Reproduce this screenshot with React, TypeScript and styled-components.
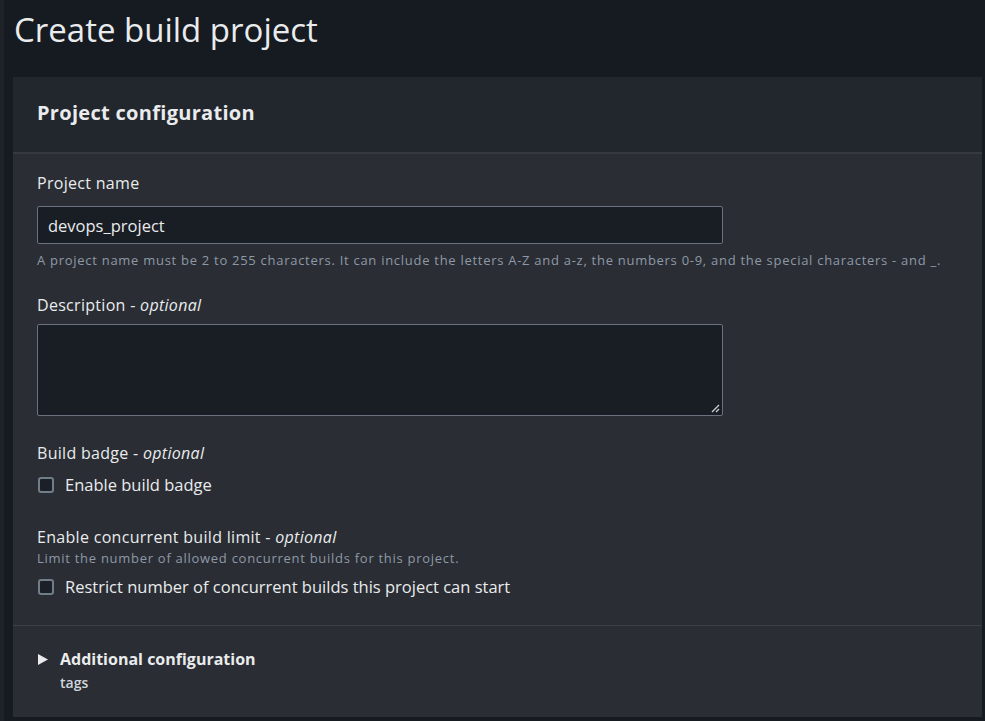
import React from "react";
import styled, { createGlobalStyle } from "styled-components";

const Global = createGlobalStyle`
  html, body { margin: 0; padding: 0; background: #161a21; }
  body { font-family: "Open Sans", "Noto Sans", sans-serif; color: #e9ebed; }
  * { box-sizing: border-box; }
`;

const Page = styled.div`
  width: 985px;
  height: 721px;
  background: #161a21;
  border-left: 4px solid #1f2329;
  padding: 0 3px 0 9px;
  display: flex;
  flex-direction: column;
  overflow: hidden;
`;

const Title = styled.h1`
  margin: 0;
  height: 77px;
  padding-top: 8px;
  padding-left: 1px;
  font-size: 33px;
  font-weight: 400;
  color: #e9ebed;
  line-height: 44px;
`;

const Card = styled.section`
  background: #2a2d33;
  height: 640px;
  display: flex;
  flex-direction: column;
  box-shadow: inset 0 1px 0 #30343b;
`;

const CardHeader = styled.header`
  background: #22262d;
  height: 77px;
  border-bottom: 2px solid #353a41;
  padding: 22px 24px 0;
`;

const CardTitle = styled.h2`
  margin: 0;
  font-size: 20px;
  font-weight: 700;
  letter-spacing: 0.3px;
  line-height: 28px;
  color: #e9ebed;
`;

const Body = styled.div`
  padding: 17px 24px 0;
  display: flex;
  flex-direction: column;
`;

const Field = styled.div<{ $gap?: number }>`
  display: flex;
  flex-direction: column;
  margin-bottom: ${(p) => p.$gap ?? 0}px;
`;

const Label = styled.div<{ $mb: number }>`
  font-size: 16px;
  letter-spacing: 0.3px;
  line-height: 24px;
  color: #e9ebed;
  margin-bottom: ${(p) => p.$mb}px;
  em { font-style: italic; }
`;

const Hint = styled.div<{ $mt: number; $mb: number }>`
  font-size: 13px;
  letter-spacing: 0.72px;
  line-height: ${(p) => (p.$mt ? 20 : 18)}px;
  color: #8d99a8;
  margin-top: ${(p) => p.$mt}px;
  margin-bottom: ${(p) => p.$mb}px;
  white-space: nowrap;
`;

const Input = styled.div`
  width: 686px;
  height: 38px;
  background: #191d24;
  border: 1px solid #6a737d;
  border-radius: 2px;
  padding: 0 10px;
  display: flex;
  align-items: center;
  font-size: 16.5px;
  color: #e9ebed;
`;

const TextArea = styled.div`
  width: 686px;
  height: 92px;
  background: #191d24;
  border: 1px solid #6a737d;
  border-radius: 2px;
  position: relative;
`;

const Grip = styled.svg`
  position: absolute;
  right: 2px;
  bottom: 2px;
`;

const CheckRow = styled.label`
  display: flex;
  align-items: center;
  gap: 11px;
  font-size: 16.5px;
  line-height: 24px;
  color: #e9ebed;
`;

const Box = styled.span`
  width: 16px;
  height: 16px;
  border: 2px solid #737d88;
  border-radius: 3px;
  background: #1b2028;
  margin-left: 1px;
`;

const Divider = styled.div`
  height: 1px;
  background: #3b4047;
  margin-top: 26px;
`;

const Expander = styled.div`
  padding: 21px 24px 0;
  display: flex;
  flex-direction: column;
`;

const ExpTitle = styled.div`
  display: flex;
  align-items: center;
  gap: 11px;
  font-size: 16px;
  font-weight: 700;
  line-height: 24px;
  color: #e9ebed;
`;

const Tags = styled.div`
  font-size: 14px;
  font-weight: 600;
  line-height: 20px;
  color: #d1d5db;
  padding-left: 23px;
  margin-top: 2px;
`;

export default function App() {
  return (
    <>
      <Global />
      <Page>
        <Title>Create build project</Title>
        <Card>
          <CardHeader>
            <CardTitle>Project configuration</CardTitle>
          </CardHeader>
          <Body>
            <Field $gap={23}>
              <Label $mb={11}>Project name</Label>
              <Input>devops_project</Input>
              <Hint $mt={6} $mb={0}>
                A project name must be 2 to 255 characters. It can include the letters A-Z and a-z, the numbers 0-9, and the special characters - and _.
              </Hint>
            </Field>
            <Field $gap={25}>
              <Label $mb={7}>
                Description - <em>optional</em>
              </Label>
              <TextArea>
                <Grip width="10" height="10" viewBox="0 0 10 10">
                  <path d="M9 2 L2 9 M9 6 L6 9" stroke="#c6ccd3" strokeWidth="1.4" />
                </Grip>
              </TextArea>
            </Field>
            <Field $gap={28}>
              <Label $mb={8}>
                Build badge - <em>optional</em>
              </Label>
              <CheckRow>
                <Box />
                Enable build badge
              </CheckRow>
            </Field>
            <Field>
              <Label $mb={0}>
                Enable concurrent build limit - <em>optional</em>
              </Label>
              <Hint $mt={0} $mb={8}>Limit the number of allowed concurrent builds for this project.</Hint>
              <CheckRow>
                <Box />
                Restrict number of concurrent builds this project can start
              </CheckRow>
            </Field>
          </Body>
          <Divider />
          <Expander>
            <ExpTitle>
              <svg width="12" height="13" viewBox="0 0 12 13">
                <path d="M1 1 L11 6.5 L1 12 Z" fill="#e9ebed" />
              </svg>
              Additional configuration
            </ExpTitle>
            <Tags>tags</Tags>
          </Expander>
        </Card>
      </Page>
    </>
  );
}
